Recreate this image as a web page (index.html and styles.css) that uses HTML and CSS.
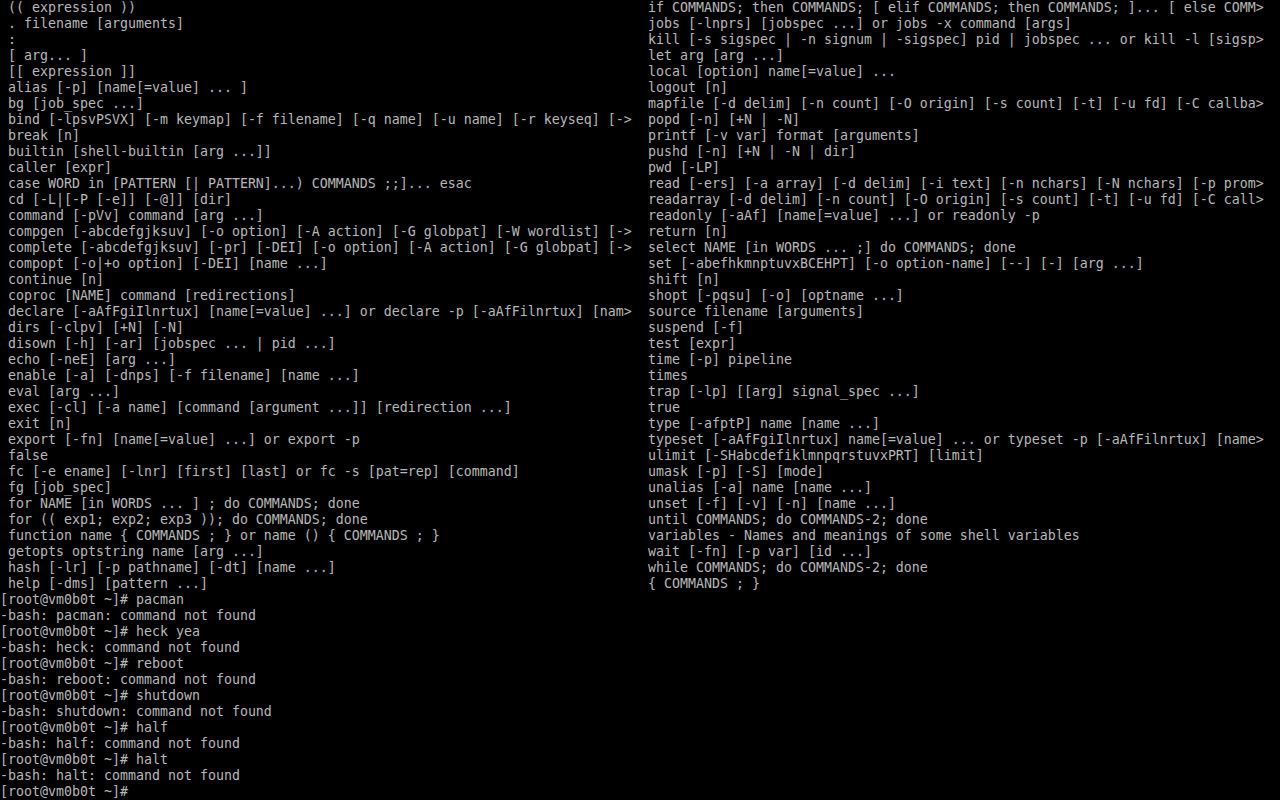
FILE: index.html
```html
<!DOCTYPE html>
<html>
<head>
<meta charset="utf-8">
<title>console</title>
<link rel="stylesheet" href="styles.css">
</head>
<body>
<main class="screen">
<pre class="col"> (( expression ))
 . filename [arguments]
 :
 [ arg... ]
 [[ expression ]]
 alias [-p] [name[=value] ... ]
 bg [job_spec ...]
 bind [-lpsvPSVX] [-m keymap] [-f filename] [-q name] [-u name] [-r keyseq] [-&gt;
 break [n]
 builtin [shell-builtin [arg ...]]
 caller [expr]
 case WORD in [PATTERN [| PATTERN]...) COMMANDS ;;]... esac
 cd [-L|[-P [-e]] [-@]] [dir]
 command [-pVv] command [arg ...]
 compgen [-abcdefgjksuv] [-o option] [-A action] [-G globpat] [-W wordlist] [-&gt;
 complete [-abcdefgjksuv] [-pr] [-DEI] [-o option] [-A action] [-G globpat] [-&gt;
 compopt [-o|+o option] [-DEI] [name ...]
 continue [n]
 coproc [NAME] command [redirections]
 declare [-aAfFgiIlnrtux] [name[=value] ...] or declare -p [-aAfFilnrtux] [nam&gt;
 dirs [-clpv] [+N] [-N]
 disown [-h] [-ar] [jobspec ... | pid ...]
 echo [-neE] [arg ...]
 enable [-a] [-dnps] [-f filename] [name ...]
 eval [arg ...]
 exec [-cl] [-a name] [command [argument ...]] [redirection ...]
 exit [n]
 export [-fn] [name[=value] ...] or export -p
 false
 fc [-e ename] [-lnr] [first] [last] or fc -s [pat=rep] [command]
 fg [job_spec]
 for NAME [in WORDS ... ] ; do COMMANDS; done
 for (( exp1; exp2; exp3 )); do COMMANDS; done
 function name { COMMANDS ; } or name () { COMMANDS ; }
 getopts optstring name [arg ...]
 hash [-lr] [-p pathname] [-dt] [name ...]
 help [-dms] [pattern ...]
[root@vm0b0t ~]# pacman
-bash: pacman: command not found
[root@vm0b0t ~]# heck yea
-bash: heck: command not found
[root@vm0b0t ~]# reboot
-bash: reboot: command not found
[root@vm0b0t ~]# shutdown
-bash: shutdown: command not found
[root@vm0b0t ~]# half
-bash: half: command not found
[root@vm0b0t ~]# halt
-bash: halt: command not found
[root@vm0b0t ~]#</pre>
<pre class="col"> if COMMANDS; then COMMANDS; [ elif COMMANDS; then COMMANDS; ]... [ else COMM&gt;
 jobs [-lnprs] [jobspec ...] or jobs -x command [args]
 kill [-s sigspec | -n signum | -sigspec] pid | jobspec ... or kill -l [sigsp&gt;
 let arg [arg ...]
 local [option] name[=value] ...
 logout [n]
 mapfile [-d delim] [-n count] [-O origin] [-s count] [-t] [-u fd] [-C callba&gt;
 popd [-n] [+N | -N]
 printf [-v var] format [arguments]
 pushd [-n] [+N | -N | dir]
 pwd [-LP]
 read [-ers] [-a array] [-d delim] [-i text] [-n nchars] [-N nchars] [-p prom&gt;
 readarray [-d delim] [-n count] [-O origin] [-s count] [-t] [-u fd] [-C call&gt;
 readonly [-aAf] [name[=value] ...] or readonly -p
 return [n]
 select NAME [in WORDS ... ;] do COMMANDS; done
 set [-abefhkmnptuvxBCEHPT] [-o option-name] [--] [-] [arg ...]
 shift [n]
 shopt [-pqsu] [-o] [optname ...]
 source filename [arguments]
 suspend [-f]
 test [expr]
 time [-p] pipeline
 times
 trap [-lp] [[arg] signal_spec ...]
 true
 type [-afptP] name [name ...]
 typeset [-aAfFgiIlnrtux] name[=value] ... or typeset -p [-aAfFilnrtux] [name&gt;
 ulimit [-SHabcdefiklmnpqrstuvxPRT] [limit]
 umask [-p] [-S] [mode]
 unalias [-a] name [name ...]
 unset [-f] [-v] [-n] [name ...]
 until COMMANDS; do COMMANDS-2; done
 variables - Names and meanings of some shell variables
 wait [-fn] [-p var] [id ...]
 while COMMANDS; do COMMANDS-2; done
 { COMMANDS ; }</pre>
</main>
</body>
</html>
```
FILE: styles.css
```css
html, body {
  margin: 0;
  padding: 0;
  background: #000;
  overflow: hidden;
}

.screen {
  display: grid;
  grid-template-columns: 640px 640px;
  width: 1280px;
  height: 800px;
  background: #000;
}

.col {
  margin: 0;
  font-family: "DejaVu Sans Mono", "Liberation Mono", monospace;
  font-size: 13.29px;
  line-height: 16px;
  color: #b8b8b8;
  white-space: pre;
  overflow: hidden;
  font-weight: normal;
}
```
